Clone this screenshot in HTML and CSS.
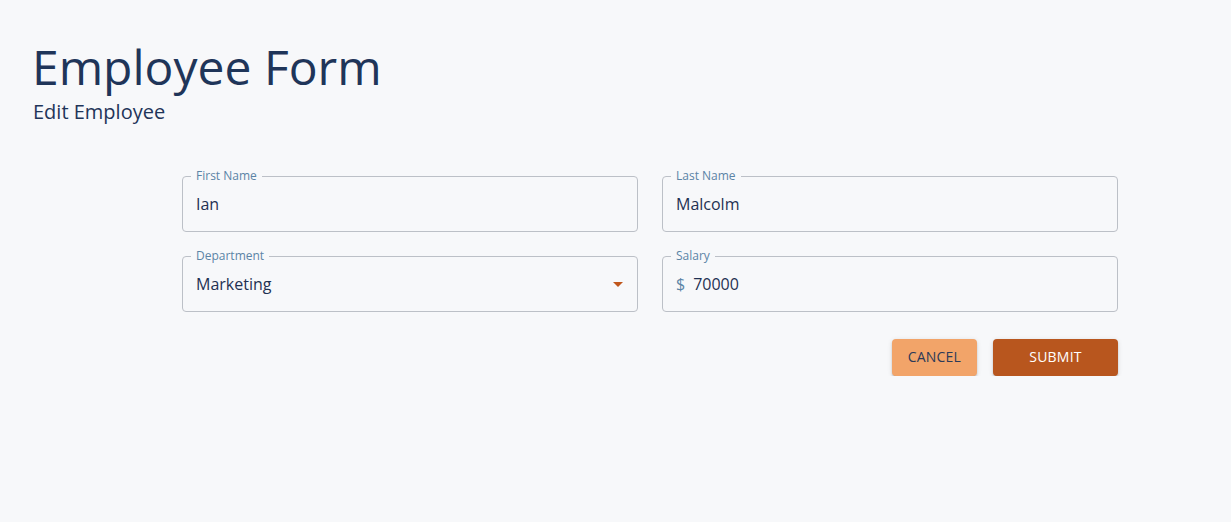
FILE: index.html
```html
<!DOCTYPE html>
<html lang="en">
<head>
<meta charset="utf-8">
<title>Employee Form</title>
<link rel="stylesheet" href="styles.css">
</head>
<body>
<main class="page">
  <header class="page-header">
    <h1 class="title">Employee Form</h1>
    <p class="subtitle">Edit Employee</p>
  </header>
  <form class="form">
    <div class="grid">
      <div class="field">
        <span class="field-label">First Name</span>
        <span class="field-value">Ian</span>
      </div>
      <div class="field">
        <span class="field-label">Last Name</span>
        <span class="field-value">Malcolm</span>
      </div>
      <div class="field field-select">
        <span class="field-label">Department</span>
        <span class="field-value">Marketing</span>
        <svg class="select-icon" width="24" height="24" viewBox="0 0 24 24"><path d="M7 10l5 5 5-5z" fill="#c0561c"/></svg>
      </div>
      <div class="field">
        <span class="field-label">Salary</span>
        <span class="adornment">$</span>
        <span class="field-value">70000</span>
      </div>
    </div>
    <div class="actions">
      <button type="button" class="btn btn-cancel">CANCEL</button>
      <button type="button" class="btn btn-submit">SUBMIT</button>
    </div>
  </form>
</main>
</body>
</html>
```

FILE: styles.css
```css
* { box-sizing: border-box; }

html, body {
  margin: 0;
  padding: 0;
  background: #f7f8fa;
}

body {
  font-family: "Open Sans", "Noto Sans", sans-serif;
  color: #1f3152;
}

.page {
  padding: 38px 32px 0 32px;
}

.page-header {
  display: flex;
  flex-direction: column;
}

.title {
  margin: 0;
  font-size: 48px;
  font-weight: 400;
  line-height: 1.2;
  color: #1f3559;
}

.subtitle {
  margin: 1px 0 0 1px;
  font-size: 20px;
  line-height: 30px;
  color: #1f3559;
}

.form {
  margin: 49px 0 0 150px;
  width: 936px;
}

.grid {
  display: grid;
  grid-template-columns: 1fr 1fr;
  column-gap: 24px;
  row-gap: 24px;
}

.field {
  position: relative;
  height: 56px;
  border: 1px solid #bcc0c7;
  border-radius: 4px;
  display: flex;
  align-items: center;
  padding: 0 13px;
  font-size: 16px;
  line-height: 23px;
}

.field-label {
  position: absolute;
  top: -9px;
  left: 8px;
  padding: 0 5px;
  background: #f7f8fa;
  font-size: 12px;
  line-height: 16px;
  color: #5b84a6;
}

.field-value {
  color: #1f3152;
  padding-top: 2px;
}

.adornment {
  color: #5b84a6;
  margin-right: 8px;
  padding-top: 2px;
}

.select-icon {
  position: absolute;
  right: 7px;
  top: 15px;
}

.actions {
  display: flex;
  justify-content: flex-end;
  gap: 16px;
  margin-top: 27px;
}

.btn {
  height: 37px;
  border: none;
  border-radius: 4px;
  font-family: "Open Sans", "Noto Sans", sans-serif;
  font-size: 14px;
  font-weight: 400;
  letter-spacing: 0.2px;
  padding: 0 16px 1px;
  cursor: pointer;
  box-shadow: 0 3px 1px -2px rgba(0,0,0,0.2), 0 2px 2px 0 rgba(0,0,0,0.14), 0 1px 5px 0 rgba(0,0,0,0.12);
}

.btn-cancel {
  background: #f2a469;
  color: #2b3a58;
}

.btn-submit {
  width: 125px;
  background: #b8561e;
  color: #ffffff;
}
```
